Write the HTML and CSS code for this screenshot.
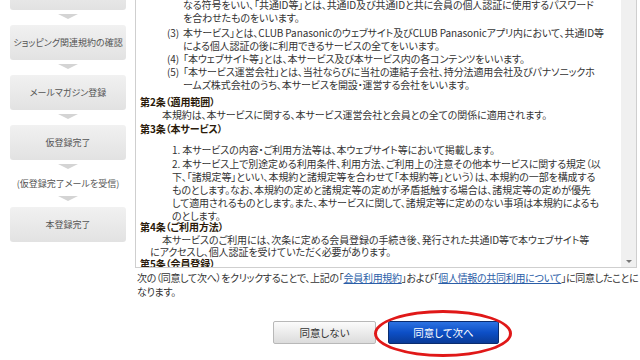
FILE: index.html
```html
<!DOCTYPE html>
<html lang="ja">
<head>
<meta charset="utf-8">
<title>会員規約の確認</title>
<link rel="stylesheet" href="styles.css">
</head>
<body>
<div class="page">
  <nav class="side">
    <div class="step"></div>
    <div class="arrow"></div>
    <div class="step">ショッピング関連規約の確認</div>
    <div class="arrow"></div>
    <div class="step">メールマガジン登録</div>
    <div class="arrow"></div>
    <div class="step">仮登録完了</div>
    <div class="arrow"></div>
    <div class="note">(仮登録完了メールを受信)</div>
    <div class="arrow"></div>
    <div class="step">本登録完了</div>
  </nav>
  <main class="main">
    <div class="box">
      <div class="content">
        <p class="cont">なる符号をいい、「共通ID等」とは、共通ID及び共通IDと共に会員の個人認証に使用するパスワード<br>を合わせたものをいいます。</p>
        <ul class="defs">
          <li><span class="num">(3)</span><span class="txt">本サービス」とは、CLUB Panasonicのウェブサイト及びCLUB Panasonicアプリ内において、共通ID等<br>による個人認証の後に利用できるサービスの全てをいいます。</span></li>
          <li><span class="num">(4)</span><span class="txt">「本ウェブサイト等」とは、本サービス及び本サービス内の各コンテンツをいいます。</span></li>
          <li><span class="num">(5)</span><span class="txt">「本サービス運営会社」とは、当社ならびに当社の連結子会社、持分法適用会社及びパナソニックホ<br>ームズ株式会社のうち、本サービスを開設・運営する会社をいいます。</span></li>
        </ul>
        <h3 class="art">第2条（適用範囲）</h3>
        <p class="para para-a">本規約は、本サービスに関する、本サービス運営会社と会員との全ての関係に適用されます。</p>
        <h3 class="art">第3条（本サービス）</h3>
        <ol class="nums">
          <li>1. 本サービスの内容・ご利用方法等は、本ウェブサイト等において掲載します。</li>
          <li>2. 本サービス上で別途定める利用条件、利用方法、ご利用上の注意その他本サービスに関する規定（以<br>下、「諸規定等」といい、本規約と諸規定等を合わせて「本規約等」という）は、本規約の一部を構成する<br>ものとします。なお、本規約の定めと諸規定等の定めが矛盾抵触する場合は、諸規定等の定めが優先<br>して適用されるものとします。また、本サービスに関して、諸規定等に定めのない事項は本規約によるも<br>のとします。</li>
        </ol>
        <h3 class="art">第4条（ご利用方法）</h3>
        <p class="para para-b">本サービスのご利用には、次条に定める会員登録の手続き後、発行された共通ID等で本ウェブサイト等<br>にアクセスし、個人認証を受けていただく必要があります。</p>
        <h3 class="art art-last">第5条（会員登録）</h3>
      </div>
      <div class="scroll"><span class="down"></span></div>
    </div>
    <p class="agree">次の（同意して次へ）をクリックすることで、上記の「<a href="#">会員利用規約</a>」および「<a href="#">個人情報の共同利用について</a>」に同意したことに<br>なります。</p>
    <div class="buttons">
      <button class="btn btn-no">同意しない</button>
      <button class="btn btn-yes">同意して次へ</button>
      <span class="circle"></span>
    </div>
  </main>
</div>
</body>
</html>
```
FILE: styles.css
```css
* { box-sizing: border-box; margin: 0; padding: 0; }
html, body { width: 640px; height: 360px; overflow: hidden; background: #fff; }
body {
  font-family: "Noto Sans CJK JP", "Noto Sans", sans-serif;
  font-feature-settings: "palt";
  font-size: 10px;
  letter-spacing: -0.1px;
  color: #333;
}
.page { display: flex; padding-left: 10px; gap: 9px; }

/* sidebar steps */
.side { width: 116px; display: flex; flex-direction: column; margin-top: -25px; flex-shrink: 0; }
.step {
  height: 35px;
  border-radius: 3px;
  background: linear-gradient(#f1f1f1, #e2e2e2);
  display: flex; align-items: center; justify-content: center;
  font-size: 9px; letter-spacing: 0; color: #555;
}
.arrow { height: 15px; display: flex; align-items: center; justify-content: center; padding-bottom: 2px; }
.arrow::before {
  content: "";
  border-left: 10px solid transparent;
  border-right: 10px solid transparent;
  border-top: 5px solid #d4d4d4;
}
.note { height: 17px; line-height: 17px; text-align: center; font-size: 9px; letter-spacing: 0; color: #555; }

/* main */
.main { width: 502px; display: flex; flex-direction: column; flex-shrink: 0; }
.box { height: 268px; border: 1px solid #cfcfcf; border-top: 0; display: flex; }
.content { flex: 1; padding-left: 4px; overflow: hidden; line-height: 13px; white-space: nowrap; }
.scroll { width: 15px; flex-shrink: 0; background: #f0f0f0; display: flex; flex-direction: column; justify-content: flex-end; align-items: center; padding-bottom: 4px; }
.down { border-left: 3px solid transparent; border-right: 3px solid transparent; border-top: 3px solid #777; }

.cont { margin-top: -2px; padding-left: 43px; }
.defs { list-style: none; margin: 2px 0 4px; }
.defs li { display: flex; }
.num { width: 43px; padding-left: 27px; flex-shrink: 0; }
.art { font-size: 10px; font-weight: bold; color: #2a1a0a; }
.para { padding-left: 10px; text-indent: 12px; }
.para-a { margin-bottom: 1px; }
.para-b { line-height: 12px; margin-top: 1px; }
.art-last { line-height: 11px; }
.nums { list-style: none; padding-left: 32px; margin: 8px 0 -2px; }
.nums li + li { margin-top: 1px; }

.agree { padding: 3px 0 0 2px; line-height: 14px; white-space: nowrap; letter-spacing: -0.3px; }
.agree a { color: #2b5ea8; text-decoration: underline; }

.buttons { position: relative; display: flex; justify-content: center; gap: 12px; margin-top: 22px; }
.btn {
  height: 23px; font-family: inherit; font-feature-settings: "palt"; font-size: 10.5px;
  border-radius: 2px; cursor: pointer;
}
.btn-no { width: 103px; color: #333; background: linear-gradient(#fbfbfb, #dcdcdc); border: 1px solid #b8b8b8; }
.btn-yes { width: 111px; color: #fff; background: linear-gradient(#2c72e2, #0d4fc6 50%, #0a3b98); border: 1px solid #0b2c6e; }
.circle {
  position: absolute; left: 239px; top: -11px; width: 138px; height: 47px;
  border: 3px solid #e01818; border-radius: 50%;
  pointer-events: none;
}
```
